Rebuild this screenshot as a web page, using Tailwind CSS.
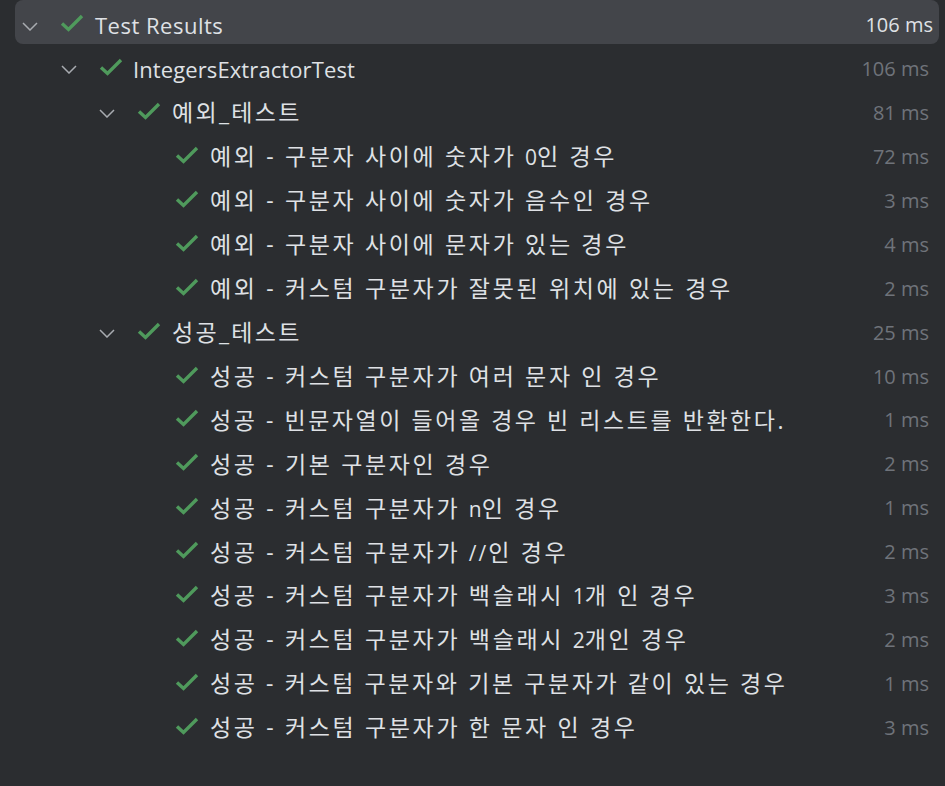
<!DOCTYPE html>
<html>
<head>
<meta charset="utf-8">
<script src="https://cdn.jsdelivr.net/npm/@tailwindcss/browser@4"></script>
</head>
<body class="bg-[#2b2d30] w-[945px] h-[786px] overflow-hidden font-['Open_Sans','Noto_Sans_CJK_KR',sans-serif] text-[22px] text-[#dfe1e5]">
<svg class="hidden">
  <symbol id="check" viewBox="0 0 24 18"><path d="M2 9.5 L8.5 15.5 L22 2" fill="none" stroke="#4f9a5c" stroke-width="3.4"/></symbol>
  <symbol id="chevron" viewBox="0 0 16 9"><path d="M1 1 L8 8 L15 1" fill="none" stroke="#a8abb0" stroke-width="1.5"/></symbol>
</svg>

<!-- Test Results -->
<div class="pt-[4px]">
  <div class="absolute left-[15px] top-0 w-[924px] h-[44px] rounded-lg bg-[#43454a]"></div>
  <div class="relative flex items-center h-[44px] pl-[22px] pr-[12px]">
    <svg class="w-[16px] h-[9px] mr-[22px]"><use href="#chevron"/></svg>
    <svg class="w-[24px] h-[18px] mr-[11px] -mt-[6px]"><use href="#check"/></svg>
    <span class="tracking-[0.5px] pb-[2px]">Test Results</span>
    <span class="ml-auto text-[#dfe1e5] text-[20px] pb-[2px]">106 ms</span>
  </div>

  <div class="flex items-center h-[43.95px] pl-[61px] pr-[16px]">
    <svg class="w-[16px] h-[9px] mr-[22px]"><use href="#chevron"/></svg>
    <svg class="w-[24px] h-[18px] mr-[10px] -mt-[6px]"><use href="#check"/></svg>
    <span class="tracking-[0.1px]">IntegersExtractorTest</span>
    <span class="ml-auto text-[#6f737a] text-[20px] pb-[2px]">106 ms</span>
  </div>

  <!-- 예외 -->
  <div class="flex items-center h-[43.95px] pl-[99px] pr-[16px]">
    <svg class="w-[16px] h-[9px] mr-[22px]"><use href="#chevron"/></svg>
    <svg class="w-[24px] h-[18px] mr-[11px] -mt-[6px]"><use href="#check"/></svg>
    <span class="text-[23px] tracking-[2.3px] pb-[3px]">예외_테스트</span>
    <span class="ml-auto text-[#6f737a] text-[20px] pb-[2px]">81 ms</span>
  </div>
  <div class="flex items-center h-[43.95px] pl-[175px] pr-[16px]">
    <svg class="w-[24px] h-[18px] mr-[11px] -mt-[6px]"><use href="#check"/></svg>
    <span class="text-[23px] tracking-[2.65px] pb-[3px]">예외 - 구분자 사이에 숫자가 <span class="text-[21px] tracking-normal">0</span>인 경우</span>
    <span class="ml-auto text-[#6f737a] text-[20px] pb-[2px]">72 ms</span>
  </div>
  <div class="flex items-center h-[43.95px] pl-[175px] pr-[16px]">
    <svg class="w-[24px] h-[18px] mr-[11px] -mt-[6px]"><use href="#check"/></svg>
    <span class="text-[23px] tracking-[2.65px] pb-[3px]">예외 - 구분자 사이에 숫자가 음수인 경우</span>
    <span class="ml-auto text-[#6f737a] text-[20px] pb-[2px]">3 ms</span>
  </div>
  <div class="flex items-center h-[43.95px] pl-[175px] pr-[16px]">
    <svg class="w-[24px] h-[18px] mr-[11px] -mt-[6px]"><use href="#check"/></svg>
    <span class="text-[23px] tracking-[2.65px] pb-[3px]">예외 - 구분자 사이에 문자가 있는 경우</span>
    <span class="ml-auto text-[#6f737a] text-[20px] pb-[2px]">4 ms</span>
  </div>
  <div class="flex items-center h-[43.95px] pl-[175px] pr-[16px]">
    <svg class="w-[24px] h-[18px] mr-[11px] -mt-[6px]"><use href="#check"/></svg>
    <span class="text-[23px] tracking-[2.65px] pb-[3px]">예외 - 커스텀 구분자가 잘못된 위치에 있는 경우</span>
    <span class="ml-auto text-[#6f737a] text-[20px] pb-[2px]">2 ms</span>
  </div>

  <!-- 성공 -->
  <div class="flex items-center h-[43.95px] pl-[99px] pr-[16px]">
    <svg class="w-[16px] h-[9px] mr-[22px]"><use href="#chevron"/></svg>
    <svg class="w-[24px] h-[18px] mr-[11px] -mt-[6px]"><use href="#check"/></svg>
    <span class="text-[23px] tracking-[2.3px] pb-[3px]">성공_테스트</span>
    <span class="ml-auto text-[#6f737a] text-[20px] pb-[2px]">25 ms</span>
  </div>
  <div class="flex items-center h-[43.95px] pl-[175px] pr-[16px]">
    <svg class="w-[24px] h-[18px] mr-[11px] -mt-[6px]"><use href="#check"/></svg>
    <span class="text-[23px] tracking-[2.65px] pb-[3px]">성공 - 커스텀 구분자가 여러 문자 인 경우</span>
    <span class="ml-auto text-[#6f737a] text-[20px] pb-[2px]">10 ms</span>
  </div>
  <div class="flex items-center h-[43.95px] pl-[175px] pr-[16px]">
    <svg class="w-[24px] h-[18px] mr-[11px] -mt-[6px]"><use href="#check"/></svg>
    <span class="text-[23px] tracking-[2.55px] pb-[3px]">성공 - 빈문자열이 들어올 경우 빈 리스트를 반환한다<span class="tracking-normal">.</span></span>
    <span class="ml-auto text-[#6f737a] text-[20px] pb-[2px]">1 ms</span>
  </div>
  <div class="flex items-center h-[43.95px] pl-[175px] pr-[16px]">
    <svg class="w-[24px] h-[18px] mr-[11px] -mt-[6px]"><use href="#check"/></svg>
    <span class="text-[23px] tracking-[2.65px] pb-[3px]">성공 - 기본 구분자인 경우</span>
    <span class="ml-auto text-[#6f737a] text-[20px] pb-[2px]">2 ms</span>
  </div>
  <div class="flex items-center h-[43.95px] pl-[175px] pr-[16px]">
    <svg class="w-[24px] h-[18px] mr-[11px] -mt-[6px]"><use href="#check"/></svg>
    <span class="text-[23px] tracking-[2.65px] pb-[3px]">성공 - 커스텀 구분자가 <span class="text-[21px] tracking-normal">n</span>인 경우</span>
    <span class="ml-auto text-[#6f737a] text-[20px] pb-[2px]">1 ms</span>
  </div>
  <div class="flex items-center h-[43.95px] pl-[175px] pr-[16px]">
    <svg class="w-[24px] h-[18px] mr-[11px] -mt-[6px]"><use href="#check"/></svg>
    <span class="text-[23px] tracking-[2.65px] pb-[3px]">성공 - 커스텀 구분자가 <span class="text-[21px] tracking-[2px]">//</span>인 경우</span>
    <span class="ml-auto text-[#6f737a] text-[20px] pb-[2px]">2 ms</span>
  </div>
  <div class="flex items-center h-[43.95px] pl-[175px] pr-[16px]">
    <svg class="w-[24px] h-[18px] mr-[11px] -mt-[6px]"><use href="#check"/></svg>
    <span class="text-[23px] tracking-[2.65px] pb-[3px]">성공 - 커스텀 구분자가 백슬래시 <span class="text-[21px] tracking-normal">1</span>개 인 경우</span>
    <span class="ml-auto text-[#6f737a] text-[20px] pb-[2px]">3 ms</span>
  </div>
  <div class="flex items-center h-[43.95px] pl-[175px] pr-[16px]">
    <svg class="w-[24px] h-[18px] mr-[11px] -mt-[6px]"><use href="#check"/></svg>
    <span class="text-[23px] tracking-[2.65px] pb-[3px]">성공 - 커스텀 구분자가 백슬래시 <span class="text-[21px] tracking-normal">2</span>개인 경우</span>
    <span class="ml-auto text-[#6f737a] text-[20px] pb-[2px]">2 ms</span>
  </div>
  <div class="flex items-center h-[43.95px] pl-[175px] pr-[16px]">
    <svg class="w-[24px] h-[18px] mr-[11px] -mt-[6px]"><use href="#check"/></svg>
    <span class="text-[23px] tracking-[2.6px] pb-[3px]">성공 - 커스텀 구분자와 기본 구분자가 같이 있는 경우</span>
    <span class="ml-auto text-[#6f737a] text-[20px] pb-[2px]">1 ms</span>
  </div>
  <div class="flex items-center h-[43.95px] pl-[175px] pr-[16px]">
    <svg class="w-[24px] h-[18px] mr-[11px] -mt-[6px]"><use href="#check"/></svg>
    <span class="text-[23px] tracking-[2.65px] pb-[3px]">성공 - 커스텀 구분자가 한 문자 인 경우</span>
    <span class="ml-auto text-[#6f737a] text-[20px] pb-[2px]">3 ms</span>
  </div>
</div>
</body>
</html>
